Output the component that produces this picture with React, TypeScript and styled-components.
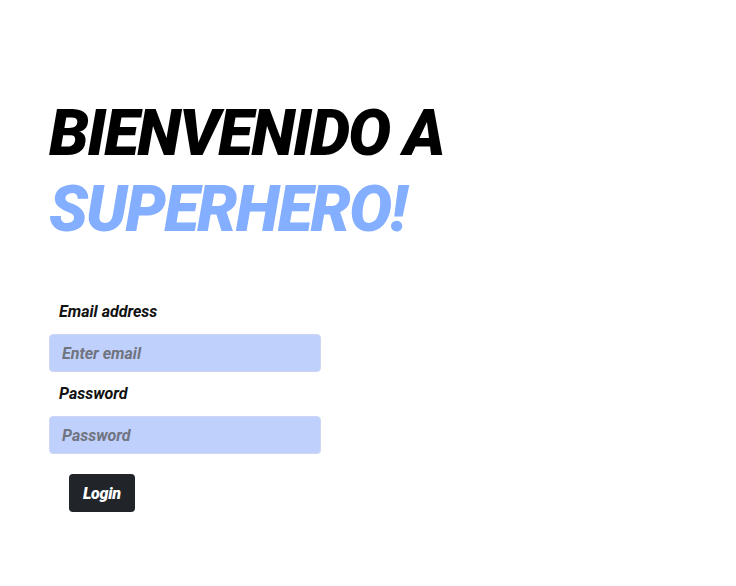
import React from "react";
import styled, { createGlobalStyle } from "styled-components";

const Global = createGlobalStyle`
  html, body { margin: 0; padding: 0; background: #ffffff; }
  body { font-family: Roboto, "Open Sans", sans-serif; }
`;

const Page = styled.main`
  display: flex;
  flex-direction: column;
  padding: 96px 0 0 49px;
`;

const Title = styled.h1`
  margin: 0;
  font-family: Roboto, sans-serif;
  font-style: italic;
  font-weight: 900;
  font-size: 64px;
  line-height: 76px;
  letter-spacing: -1.8px;
  color: #000000;
  text-transform: uppercase;
`;

const Accent = styled.span`
  display: block;
  color: #84aeff;
`;

const Form = styled.form`
  display: flex;
  flex-direction: column;
  width: 272px;
  margin-top: 54px;
`;

const Label = styled.label`
  padding-left: 10px;
  margin-bottom: 12px;
  font-family: Roboto, sans-serif;
  font-style: italic;
  font-weight: 700;
  font-size: 16px;
  line-height: 20px;
  color: #111111;
`;

const Input = styled.input`
  box-sizing: border-box;
  height: 38px;
  margin-bottom: 12px;
  padding: 0 12px;
  border: 1px solid #cdd7f3;
  border-radius: 4px;
  background: #c0d0fc;
  font-family: Roboto, sans-serif;
  font-style: italic;
  font-weight: 700;
  font-size: 16px;
  color: #333;
  outline: none;
  &::placeholder { color: #6f7480; }
`;

const Button = styled.button`
  align-self: flex-start;
  margin: 8px 0 0 20px;
  height: 38px;
  padding: 0 14px;
  border: none;
  border-radius: 4px;
  background: #212529;
  color: #ffffff;
  font-family: Roboto, sans-serif;
  font-style: italic;
  font-weight: 900;
  font-size: 16px;
  letter-spacing: -0.3px;
`;

export default function App() {
  return (
    <>
      <Global />
      <Page>
        <Title>
          Bienvenido a
          <Accent>Superhero!</Accent>
        </Title>
        <Form onSubmit={(e) => e.preventDefault()}>
          <Label htmlFor="email">Email address</Label>
          <Input id="email" type="email" placeholder="Enter email" />
          <Label htmlFor="password">Password</Label>
          <Input id="password" type="password" placeholder="Password" />
          <Button type="submit">Login</Button>
        </Form>
      </Page>
    </>
  );
}
